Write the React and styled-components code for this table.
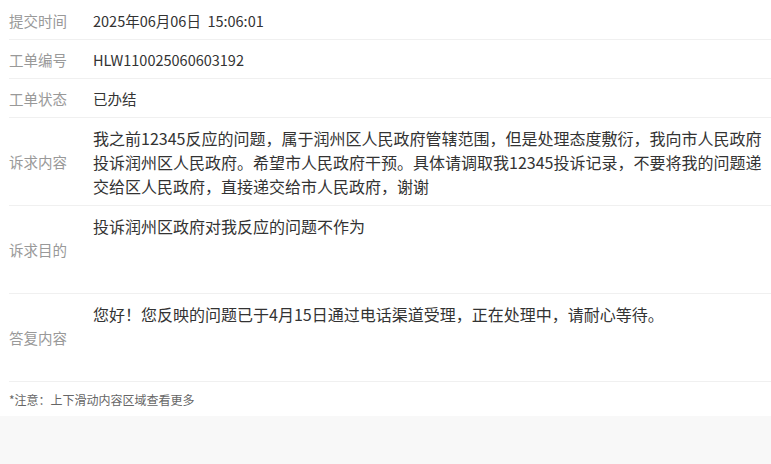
import React from 'react';
import styled, { createGlobalStyle } from 'styled-components';

const GlobalStyle = createGlobalStyle`
  html, body {
    margin: 0;
    padding: 0;
    background: #f8f8f8;
  }
  body {
    font-family: 'Noto Sans CJK SC', 'Noto Sans', sans-serif;
  }
`;

const Panel = styled.div`
  box-sizing: border-box;
  width: 100%;
  background: #ffffff;
  padding: 1px 0 0 9px;
`;

const Row = styled.div`
  display: flex;
  align-items: ${props => (props.tall ? 'stretch' : 'center')};
  height: ${props => (props.tall ? '88px' : '39px')};
  box-sizing: border-box;
  border-bottom: 1px solid #f0f0f0;
`;

const Label = styled.div`
  flex: 0 0 84px;
  display: flex;
  align-items: center;
  font-size: 14.5px;
  color: #999999;
`;

const Value = styled.div`
  flex: 1;
  padding-right: 8px;
  font-size: 14.5px;
  color: #333333;
`;

const ScrollValue = styled.div`
  flex: 1;
  box-sizing: border-box;
  margin: 8px 8px 7px 0;
  height: 72px;
  overflow-y: auto;
  scrollbar-width: none;
  font-size: 16px;
  line-height: 24px;
  color: #333333;
  &::-webkit-scrollbar {
    display: none;
  }
`;

const Note = styled.div`
  padding: 9px 0 8px;
  font-size: 12px;
  line-height: 17px;
  color: #666666;
`;

const rows = [
  { label: '提交时间', value: '2025年06月06日\u00a0\u00a015:06:01' },
  { label: '工单编号', value: 'HLW110025060603192' },
  { label: '工单状态', value: '已办结' },
  {
    label: '诉求内容',
    tall: true,
    value:
      '我之前12345反应的问题，属于润州区人民政府管辖范围，但是处理态度敷衍，我向市人民政府投诉润州区人民政府。希望市人民政府干预。具体请调取我12345投诉记录，不要将我的问题递交给区人民政府，直接递交给市人民政府，谢谢',
  },
  { label: '诉求目的', tall: true, value: '投诉润州区政府对我反应的问题不作为' },
  {
    label: '答复内容',
    tall: true,
    value: '您好！您反映的问题已于4月15日通过电话渠道受理，正在处理中，请耐心等待。',
  },
];

function App() {
  return (
    <>
      <GlobalStyle />
      <Panel>
        {rows.map(row => (
          <Row key={row.label} tall={row.tall}>
            <Label>{row.label}</Label>
            {row.tall ? (
              <ScrollValue>{row.value}</ScrollValue>
            ) : (
              <Value>{row.value}</Value>
            )}
          </Row>
        ))}
        <Note>*注意：上下滑动内容区域查看更多</Note>
      </Panel>
    </>
  );
}

export default App;
